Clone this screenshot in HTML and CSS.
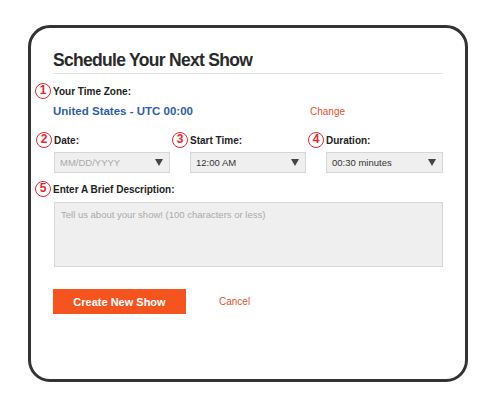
FILE: index.html
```html
<!DOCTYPE html>
<html>
<head>
<meta charset="utf-8">
<link rel="stylesheet" href="styles.css">
</head>
<body>
<div class="frame">
  <h1 class="title">Schedule Your Next Show</h1>

  <div class="label"><span class="num">1</span>Your Time Zone:</div>
  <div class="tz-row">
    <span class="tz">United States - UTC 00:00</span>
    <a class="link change">Change</a>
  </div>

  <div class="cols">
    <div class="col">
      <div class="label"><span class="num">2</span>Date:</div>
      <div class="select placeholder"><span>MM/DD/YYYY</span><span class="arrow"></span></div>
    </div>
    <div class="col">
      <div class="label"><span class="num">3</span>Start Time:</div>
      <div class="select"><span>12:00 AM</span><span class="arrow"></span></div>
    </div>
    <div class="col">
      <div class="label"><span class="num">4</span>Duration:</div>
      <div class="select"><span>00:30 minutes</span><span class="arrow"></span></div>
    </div>
  </div>

  <div class="label desc-label"><span class="num">5</span>Enter A Brief Description:</div>
  <div class="textarea">Tell us about your show! (100 characters or less)</div>

  <div class="actions">
    <button class="btn">Create New Show</button>
    <a class="link cancel">Cancel</a>
  </div>
</div>
</body>
</html>
```
FILE: styles.css
```css
* { box-sizing: border-box; }
html, body { margin: 0; padding: 0; background: #fff; }
body { font-family: "Liberation Sans", Arial, sans-serif; color: #222; }

.frame {
  margin: 25px 0 0 28px;
  width: 440px;
  height: 357px;
  border: 3px solid #333;
  border-radius: 22px;
  padding: 21px 22px 0 22px;
}

.title {
  margin: 0;
  font-size: 17.5px;
  line-height: 22px;
  font-weight: bold;
  color: #2a2a2a;
  letter-spacing: -0.7px;
  padding-bottom: 2px;
  border-bottom: 1px solid #e2e2e2;
}

.label {
  display: flex;
  align-items: center;
  margin-left: -18px;
  font-size: 10px;
  line-height: 15px;
  font-weight: bold;
  color: #222;
}
.title + .label { margin-top: 9px; }

.num {
  width: 16px;
  height: 16px;
  border: 1.5px solid #e2292f;
  border-radius: 50%;
  color: #e2292f;
  font-size: 12px;
  line-height: 13px;
  text-align: center;
  font-weight: bold;
  margin-right: 2px;
  flex: none;
}

.tz-row {
  display: flex;
  align-items: center;
  margin-top: 5px;
  height: 14px;
}
.tz {
  width: 257px;
  font-size: 11.5px;
  font-weight: bold;
  color: #2f5ea8;
}
.link {
  font-size: 10px;
  color: #ec4f2e;
  cursor: pointer;
}

.cols {
  display: grid;
  grid-template-columns: 116px 116px 117px;
  column-gap: 20px;
  margin-top: 14px;
  padding-left: 1px;
}
.select {
  margin-top: 4px;
  height: 21px;
  background: #efefef;
  border: 1px solid #d6d6d6;
  display: flex;
  align-items: center;
  justify-content: space-between;
  padding: 0 6px 0 5px;
  font-size: 9.5px;
  color: #333;
}
.select.placeholder { color: #aaa; }
.arrow {
  width: 0;
  height: 0;
  border-left: 4px solid transparent;
  border-right: 4px solid transparent;
  border-top: 7px solid #444;
}

.desc-label { margin-top: 8px; }

.textarea {
  margin-top: 5px;
  margin-left: 1px;
  width: 389px;
  height: 65px;
  background: #efefef;
  border: 1px solid #d6d6d6;
  padding: 6px 6px;
  font-size: 9.5px;
  color: #aaa;
}

.actions {
  display: flex;
  align-items: center;
  margin-top: 22px;
}
.btn {
  width: 133px;
  height: 25px;
  background: #f5541f;
  border: none;
  color: #fff;
  font-family: "Liberation Sans", Arial, sans-serif;
  font-size: 11px;
  font-weight: bold;
  padding: 0;
}
.cancel { margin-left: 33px; }
```
